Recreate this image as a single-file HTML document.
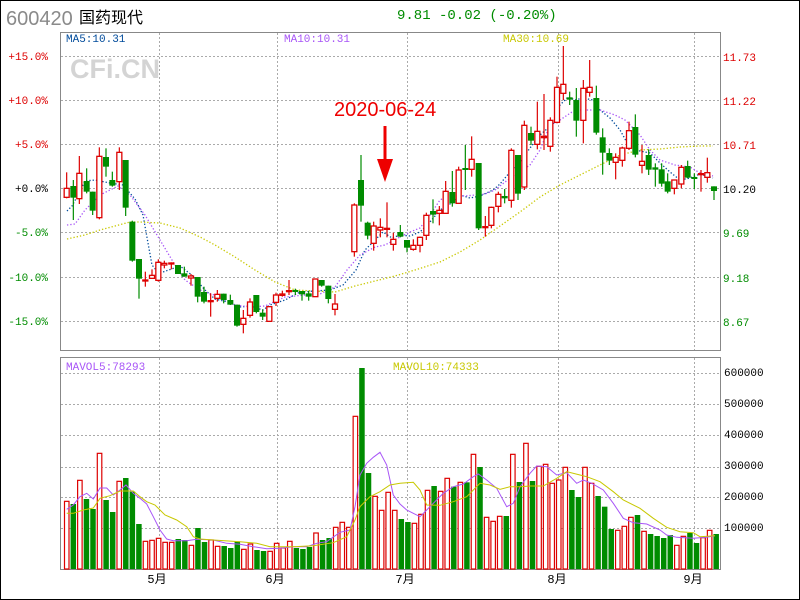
<!DOCTYPE html>
<html><head><meta charset="utf-8"><style>
html,body{margin:0;padding:0;background:#fff}
svg{display:block}
text{font-family:"Liberation Mono","DejaVu Sans Mono",monospace}
</style></head><body>
<svg id="s" width="800" height="600" xmlns="http://www.w3.org/2000/svg">
<rect x="0.5" y="0.5" width="799" height="599" fill="#fff" stroke="#000"/>
<text x="6" y="25" font-family="Liberation Sans,sans-serif" font-size="20" fill="#8a8a8a" style="font-family:'Liberation Sans',sans-serif">600420</text>
<text x="79" y="23" font-size="16" fill="#000" style="font-family:'Liberation Sans','Noto Sans CJK SC',sans-serif">国药现代</text>
<text x="397" y="19" font-size="14" fill="#008c00">9.81 -0.02 (-0.20%)</text>
<g id="grid" stroke="#aaa" stroke-dasharray="2,2" stroke-width="1"></g>
<rect x="60.5" y="32.5" width="660" height="318" fill="none" stroke="#888"/>
<rect x="60.5" y="357.5" width="660" height="212" fill="none" stroke="#888"/>
<text x="70" y="78" font-size="27" font-weight="bold" fill="#d4d4d4" style="font-family:'Liberation Sans',sans-serif">CFi.CN</text>
<text x="66" y="42" font-size="11" fill="#004b9b">MA5:10.31</text>
<text x="284" y="42" font-size="11" fill="#a855f7">MA10:10.31</text>
<text x="503" y="42" font-size="11" fill="#c8c800">MA30:10.69</text>
<text x="66" y="370" font-size="11" fill="#a855f7">MAVOL5:78293</text>
<text x="393" y="370" font-size="11" fill="#c8c800">MAVOL10:74333</text>
<g font-size="11" text-anchor="end">
<text x="48" y="60" fill="#d00">+15.0%</text>
<text x="48" y="104" fill="#d00">+10.0%</text>
<text x="48" y="148" fill="#d00">+5.0%</text>
<text x="48" y="192" fill="#000">+0.0%</text>
<text x="48" y="236" fill="#008c00">-5.0%</text>
<text x="48" y="281" fill="#008c00">-10.0%</text>
<text x="48" y="325" fill="#008c00">-15.0%</text>
</g>
<g font-size="11">
<text x="723" y="61" fill="#d00">11.73</text>
<text x="723" y="105" fill="#d00">11.22</text>
<text x="723" y="149" fill="#d00">10.71</text>
<text x="723" y="193" fill="#000">10.20</text>
<text x="723" y="237" fill="#008c00">9.69</text>
<text x="723" y="282" fill="#008c00">9.18</text>
<text x="723" y="326" fill="#008c00">8.67</text>
<text x="724" y="376" fill="#000">600000</text>
<text x="724" y="407" fill="#000">500000</text>
<text x="724" y="438" fill="#000">400000</text>
<text x="724" y="469" fill="#000">300000</text>
<text x="724" y="500" fill="#000">200000</text>
<text x="724" y="531" fill="#000">100000</text>
</g>
<g font-size="12" text-anchor="middle" style="font-family:'Liberation Sans','Noto Sans CJK SC',sans-serif">
<text x="157" y="583">5月</text><text x="275" y="583">6月</text><text x="405" y="583">7月</text><text x="557" y="583">8月</text><text x="693" y="583">9月</text>
</g>
<g id="ma"></g>
<g id="cd"></g>
<text x="334" y="116" font-size="20" fill="#e00" style="font-family:'Liberation Sans',sans-serif">2020-06-24</text>
<line x1="385" y1="126" x2="385" y2="166" stroke="#e00" stroke-width="3"/>
<polygon points="377,159 393,159 385,182" fill="#e00"/>
</svg>
<script>
var NS="http://www.w3.org/2000/svg",s=document.getElementById('s');
function el(p,t,a){var e=document.createElementNS(NS,t);for(var k in a)e.setAttribute(k,a[k]);p.appendChild(e);return e}
var g=document.getElementById('grid');
[56,100,144,188,232,277,321,373,404,435,467,497,528].forEach(function(y){el(g,'line',{x1:61,x2:720,y1:y+.5,y2:y+.5})});
[159,277,407,558,694].forEach(function(x){el(g,'line',{x1:x+.5,x2:x+.5,y1:33,y2:350});el(g,'line',{x1:x+.5,x2:x+.5,y1:358,y2:569})});
var R="#dd0000",G="#008c00",cd=document.getElementById('cd');
function candles(ox,oy,arr){arr.forEach(function(c){var x=ox+c[0]/3,bt=oy+c[2]/3,bb=oy+c[3]/3,wt=oy+c[4]/3,wb=oy+c[5]/3,col=c[1]?R:G;
el(cd,'line',{x1:x,x2:x,y1:wt,y2:wb,stroke:col,'stroke-width':1.2});
var h=Math.max(bb-bt,1);
if(c[1])el(cd,'rect',{x:x-2.5,y:bt,width:5,height:h,fill:'#fff',stroke:col,'stroke-width':1.3});
else el(cd,'rect',{x:x-3,y:bt,width:6,height:Math.max(h,2),fill:col});})}
candles(40,130,[[80,1,175,202,127,205],[100,0,168,203,150,270],[118,1,130,206,78,222],[140,0,153,185,115,190],[158,0,185,242,185,255],[178,1,79,263,52,268],[198,0,81,110,55,140],[217,0,150,167,125,170],[238,1,67,155,52,180],[257,0,90,233,90,258],[277,0,275,392,272,395],[297,0,387,446,387,506],[316,1,450,452,425,470],[336,1,436,445,418,447],[355,1,397,451,388,455],[373,1,400,405,392,415],[394,1,399,401,397,418],[414,0,405,432,405,432],[433,0,430,440,410,440],[453,1,438,444,432,467],[473,0,441,500,441,517],[492,0,486,515,470,520],[512,1,512,514,490,560],[532,1,493,505,480,515],[551,0,491,510,491,520],[571,0,510,524,494,525],[591,0,524,587,524,590],[610,1,565,583,540,610],[630,1,516,556,505,563],[649,0,495,546,495,550],[668,0,548,560,538,570],[688,1,530,574,528,574],[708,1,495,517,488,528],[727,1,492,496,482,500],[747,1,482,484,450,495],[766,0,480,484,476,495],[786,0,483,493,483,512],[806,0,490,500,483,512],[826,1,447,500,447,500],[845,0,450,467,450,470],[865,0,467,507,467,520],[885,1,522,538,492,556]]);
candles(330,40,[[73,1,495,635,490,650],[93,0,420,497,345,545],[113,0,548,587,545,598],[131,1,558,610,545,632],[151,1,562,570,535,592],[171,1,565,567,487,592],[190,1,598,613,578,632],[211,0,576,590,555,592],[231,0,600,623,600,637],[250,1,616,628,598,632],[270,1,592,616,590,637],[289,1,526,586,518,600],[309,0,513,524,478,550],[328,1,511,520,498,556],[347,1,454,520,423,520],[367,0,456,490,393,500],[386,1,390,490,380,490],[406,0,384,390,315,450],[425,1,358,388,289,410],[446,0,369,565,369,570],[466,1,560,563,528,590],[484,1,502,556,500,565],[505,1,463,499,455,517],[524,0,468,475,447,490],[544,1,331,481,325,503],[564,0,345,461,345,480],[583,1,256,441,242,450],[603,0,279,302,260,315],[622,1,274,313,185,328],[642,1,289,293,162,330],[661,1,241,319,232,335],[681,1,142,247,110,250],[700,1,133,160,18,180],[719,0,172,179,155,195],[739,0,180,242,144,290],[760,1,145,241,120,310],[779,1,142,157,60,170],[799,0,174,278,137,284],[818,0,292,338,265,404],[838,0,339,362,325,375],[857,1,352,367,340,418],[877,1,324,361,320,380],[897,1,272,325,245,330]]);
candles(560,0,[[226,0,381,464,343,472],[246,1,484,496,435,520],[266,0,465,509,448,525],[286,0,502,509,490,560],[305,0,508,551,490,560],[323,0,544,575,520,580],[343,1,540,565,540,583],[364,1,502,552,495,565],[383,0,498,533,482,535],[403,0,531,535,520,567],[423,1,521,524,510,575],[442,1,518,532,473,548],[462,0,559,573,559,600]]);
// volume
var v1=[[1,454],[0,462],[1,391],[0,447],[0,477],[1,310],[0,450],[0,486],[1,394],[0,384],[0,425],[0,522],[1,574],[1,571],[1,565],[1,577],[1,577],[0,567],[0,570],[1,586],[0,534],[0,576],[1,570],[1,589],[0,588],[0,594],[0,574],[1,598],[1,582],[0,600],[0,603],[1,604],[1,580],[1,594],[1,574],[0,594],[0,597],[0,591],[1,549],[0,570],[0,564],[1,532],[1,517],[1,532],[1,199],[0,54],[0,369],[1,439],[1,481],[1,427],[1,481],[0,507],
[0,516],[1,520],[1,493],[1,421],[0,408],[1,424],[1,385],[0,410],[1,397],[0,397],[1,313],[0,351],[1,502],[1,514],[1,499],[0,498],[1,313],[0,396],[1,280],[0,393],[1,349],[1,343],[1,400],[1,390],[1,352],[0,420],[0,441],[1,352],[1,400],[0,438],[0,470],[0,537],[1,541],[1,529],[1,502],[0,495],[1,544],[0,552],[0,558],[0,564],[0,555],[1,586],[1,559],[0,549],[0,579],[1,563],[1,541],[0,552]];
v1.forEach(function(b,i){var x=64+i*6.56,y=350+b[1]/3;
if(b[0])el(cd,'rect',{x:x+.5,y:y,width:4.5,height:569-y,fill:'#fff',stroke:R,'stroke-width':1.2});
else el(cd,'rect',{x:x,y:y,width:5.5,height:569-y,fill:G});});
var ma=document.getElementById('ma');
function pl(pts,col,dash,sw){el(ma,'polyline',{points:pts,fill:'none',stroke:col,'stroke-width':sw||1.3,'stroke-dasharray':dash||''})}
pl("67,211 72,206 78,195 85,181 95,180 110,183 123,185 135,199 143,215 148,243 152,265 157,271 163,272 180,266 193,276 205,290 215,299 228,302 240,307 250,306 263,310 270,305 285,300 300,292 315,291 330,290 343,285 356,270 365,250 375,240 383,232 392,238 400,235 410,236 420,232 430,222 440,210 450,204 460,195 470,198 480,196 493,190 500,184 510,172 520,162 530,148 540,135 555,122 560,105 568,97 575,100 583,98 593,100 600,110 610,118 620,130 630,148 640,151 650,153 660,163 670,172 680,180 690,178 700,174 713,178","#004b9b","1.3,2");
pl("67,225 75,224 85,210 100,195 118,186 130,195 145,215 160,240 175,265 185,280 200,290 220,297 235,305 250,307 265,306 285,297 305,295 320,294 335,287 347,270 360,255 375,247 385,245 400,237 410,232 420,228 430,215 440,200 450,195 465,196 475,195 485,194 495,190 505,182 515,175 530,165 540,150 550,125 560,120 572,112 580,110 600,110 615,115 625,120 640,135 650,150 660,160 675,165 690,167 700,173 713,176","#a855f7","1.3,2");
pl("67,239 85,235 100,230 115,226 130,222 140,222 160,223 180,228 200,237 215,245 235,257 255,270 275,282 295,290 315,291 335,292 355,286 375,281 395,276 415,270 440,262 460,252 480,240 500,226 520,212 540,197 560,185 580,175 600,165 620,155 640,150 660,149 680,147 700,146 713,146","#c8c800","1.3,2");
function conv(a,ox){var o=[];for(var i=0;i<a.length;i+=2)o.push((ox+a[i]/3).toFixed(1)+","+(350+a[i+1]/3).toFixed(1));return o.join(" ")}
var m5=conv([80,478,100,465,120,440,140,430,160,447,180,414,200,414,220,435,240,420,258,405,280,430,300,445,320,462,340,500,360,540,380,567,400,572,440,572,470,568,520,570,560,580,600,583,640,590,680,596,720,595,760,590,800,590,830,580,860,575,900,547,930,540,945,470,960,375,980,340,1000,322,1020,307,1040,345,1060,435,1080,462],40)+" "+conv([20,480,40,490,60,500,80,480,100,460,130,430,160,410,190,402,220,380,235,372,260,390,290,415,320,470,340,460,360,410,390,370,410,348,440,350,470,375,500,368,530,400,550,390,575,400,610,420,640,460,670,505,700,518,740,522,780,540,800,555,830,562,880,565,920,562,945,557],400);
var m10=conv([80,490,100,490,130,480,160,474,180,445,210,437,240,423,280,423,300,440,320,455,345,465,375,495,410,510,440,530,460,560,480,567,520,570,600,575,650,580,690,590,760,590,820,587,880,578,920,560,945,510,960,470,990,440,1020,425,1050,405,1080,400],40)+" "+conv([40,397,60,420,80,465,120,466,160,455,200,440,240,400,270,405,300,418,330,410,360,410,390,408,430,408,470,385,500,365,540,375,560,380,600,395,640,425,670,450,720,475,760,505,800,532,840,545,880,548,900,560,945,557],400);
var cg=document.getElementById('cd');
var e1=el(cg,'polyline',{points:m5,fill:'none',stroke:'#a855f7','stroke-width':1});
var e2=el(cg,'polyline',{points:m10,fill:'none',stroke:'#c8c800','stroke-width':1});
</script>
</body></html>
